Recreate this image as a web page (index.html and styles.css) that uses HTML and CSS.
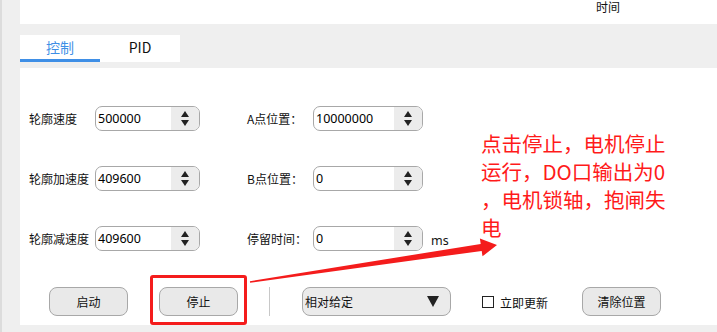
FILE: index.html
```html
<!DOCTYPE html>
<html lang="zh">
<head>
<meta charset="utf-8">
<link rel="stylesheet" href="styles.css">
</head>
<body>
<div class="app">
  <div class="left-strip"></div>
  <div class="main">
    <div class="top"><span class="top-label">时间</span></div>
    <div class="tabs">
      <div class="tab active">控制</div>
      <div class="tab">PID</div>
    </div>
    <div class="panel">
      <div class="form">
        <div class="row">
          <label class="lbl">轮廓速度</label>
          <div class="spin w105"><span class="val">500000</span><span class="btns"><i class="up"></i><i class="down"></i></span></div>
          <label class="lbl col2">A点位置：</label>
          <div class="spin w110"><span class="val">10000000</span><span class="btns"><i class="up"></i><i class="down"></i></span></div>
        </div>
        <div class="row">
          <label class="lbl">轮廓加速度</label>
          <div class="spin w105"><span class="val">409600</span><span class="btns"><i class="up"></i><i class="down"></i></span></div>
          <label class="lbl col2">B点位置：</label>
          <div class="spin w110"><span class="val">0</span><span class="btns"><i class="up"></i><i class="down"></i></span></div>
        </div>
        <div class="row">
          <label class="lbl">轮廓减速度</label>
          <div class="spin w105"><span class="val">409600</span><span class="btns"><i class="up"></i><i class="down"></i></span></div>
          <label class="lbl col2">停留时间：</label>
          <div class="spin w110"><span class="val">0</span><span class="btns"><i class="up"></i><i class="down"></i></span></div>
          <span class="unit">ms</span>
        </div>
      </div>
      <div class="actions">
        <button class="btn">启动</button>
        <button class="btn">停止</button>
        <span class="sep"></span>
        <div class="combo"><span>相对给定</span><i class="caret"></i></div>
        <label class="check"><span class="box"></span>立即更新</label>
        <button class="btn">清除位置</button>
      </div>
    </div>
  </div>
</div>

<div class="hl-box"></div>
<svg class="arrow" width="717" height="332" viewBox="0 0 717 332">
  <polygon fill="#f41c1c" points="249.9,281.2 480.7,243.9 479.9,238.5 497,245 482.5,256.3 481.7,250.9 250.1,282.8"/>
</svg>
<div class="note">点击停止，电机停止<br>运行，DO口输出为0<br>，电机锁轴，抱闸失<br>电</div>
</body>
</html>
```

FILE: styles.css
```css
* { box-sizing: border-box; }
html, body { margin: 0; padding: 0; }
body {
  width: 717px;
  height: 332px;
  overflow: hidden;
  background: #efefef;
  font-family: "Noto Sans", "Noto Sans CJK SC", sans-serif;
  font-size: 12px;
  color: #111;
  position: relative;
}
.app { display: flex; height: 332px; }
.left-strip {
  width: 20px;
  flex: none;
  background: #efefef;
  border-left: 2px solid #dcdcdc;
}
.main { flex: 1; display: flex; flex-direction: column; }
.top {
  height: 24px;
  background: #fff;
  padding-left: 576px;
  line-height: 16px;
}
.top-label { font-size: 12px; }
.tabs {
  margin-top: 11px;
  height: 27px;
  width: 160px;
  background: #fff;
  display: flex;
}
.tab {
  width: 80px;
  text-align: center;
  font-size: 14px;
  line-height: 25px;
  color: #111;
  font-family: "Noto Sans CJK SC", sans-serif;
}
.tab.active {
  color: #3f8fe6;
  border-bottom: 3px solid #3f8fe6;
}
.panel {
  margin-top: 6px;
  height: 257px;
  background: #fff;
  padding: 38px 0 0 9px;
}
.form { display: flex; flex-direction: column; gap: 35px; }
.row { display: flex; align-items: center; height: 25px; }
.lbl {
  width: 66px;
  font-family: "Noto Sans CJK SC", sans-serif;
  font-size: 12px;
}
.lbl.col2 { margin-left: 47px; }
.spin {
  height: 25px;
  border: 1px solid #a8a8a8;
  border-radius: 7px;
  display: flex;
  overflow: hidden;
  background: #fff;
}
.w105 { width: 105px; }
.w110 { width: 110px; }
.val {
  flex: 1;
  padding-left: 2px;
  font-size: 12.5px;
  line-height: 23px;
  color: #000;
}
.btns {
  width: 28px;
  background: #ececec;
  display: flex;
  flex-direction: column;
  align-items: center;
  justify-content: center;
  gap: 3px;
}
.btns i { width: 0; height: 0; border-left: 4px solid transparent; border-right: 4px solid transparent; }
.btns .up { border-bottom: 6px solid #222; }
.btns .down { border-top: 6px solid #222; }
.unit { margin-left: 8px; font-size: 12.5px; padding-top: 3px; }
.actions {
  margin-top: 36px;
  margin-left: 20px;
  display: flex;
  align-items: center;
  height: 29px;
}
.btn {
  width: 79px;
  height: 29px;
  border: 1px solid #a8a8a8;
  border-radius: 8px;
  background: #e9e9e9;
  font-family: "Noto Sans CJK SC", sans-serif;
  font-size: 12px;
  color: #111;
  padding: 0;
  margin-right: 31px;
}
.sep { width: 1px; height: 29px; background: #c8c8c8; margin-right: 32px; }
.combo {
  width: 149px;
  height: 29px;
  border: 1px solid #a8a8a8;
  border-radius: 8px;
  background: #ebebeb;
  display: flex;
  align-items: center;
  justify-content: space-between;
  padding: 0 11px 0 2px;
  font-family: "Noto Sans CJK SC", sans-serif;
  margin-right: 31px;
}
.caret { width: 0; height: 0; border-left: 6px solid transparent; border-right: 6px solid transparent; border-top: 11px solid #222; }
.check {
  display: flex;
  align-items: center;
  gap: 6px;
  font-family: "Noto Sans CJK SC", sans-serif;
  margin-right: 34px;
  padding-top: 1px;
}
.box { width: 12px; height: 12px; border: 1px solid #222; background: #fff; }
.hl-box {
  position: absolute;
  left: 150px;
  top: 275px;
  width: 97px;
  height: 50px;
  border: 3px solid #f41c1c;
  border-radius: 3px;
}
.arrow { position: absolute; left: 0; top: 0; }
.note {
  position: absolute;
  left: 481px;
  top: 129px;
  color: #ff1a1a;
  font-family: "Noto Sans CJK SC", sans-serif;
  font-size: 20.5px;
  line-height: 28px;
  white-space: nowrap;
}
```
